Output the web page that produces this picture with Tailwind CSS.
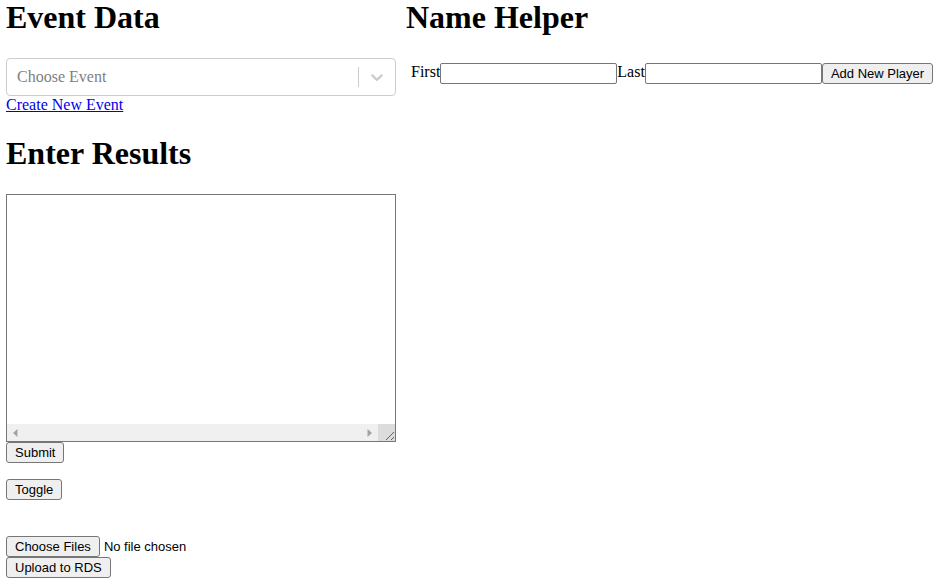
<!DOCTYPE html>
<html lang="en">
<head>
<meta charset="utf-8">
<meta name="viewport" content="width=device-width, initial-scale=1">
<title>Event Data</title>
<script src="https://cdn.jsdelivr.net/npm/@tailwindcss/browser@4"></script>
</head>
<body class="bg-white text-black text-[16px] leading-[18px] font-['Liberation_Serif','Times_New_Roman',serif]">
<main class="flex items-start gap-[10px] pl-[6px] pr-[3px]">
  <div class="w-5/12 shrink-0">
    <section>
      <h1 class="text-[32px] leading-[34px] font-bold">Event Data</h1>
      <div class="relative mt-6">
        <select aria-label="Choose Event" class="block w-full h-[38px] appearance-none rounded border border-[#cccccc] bg-white px-[10px] text-[#808080]">
          <option>Choose Event</option>
        </select>
        <div class="pointer-events-none absolute inset-y-0 right-px flex items-center">
          <span class="h-5 w-px bg-[#cccccc]"></span>
          <svg class="mx-2 size-5" viewBox="0 0 20 20" fill="#cccccc" aria-hidden="true"><path d="M4.516 7.548c0.436-0.446 1.043-0.481 1.576 0l3.908 3.747 3.908-3.747c0.533-0.481 1.141-0.446 1.574 0 0.436 0.445 0.408 1.197 0 1.615-0.406 0.418-4.695 4.502-4.695 4.502-0.217 0.223-0.502 0.335-0.787 0.335s-0.57-0.112-0.789-0.335c0 0-4.287-4.084-4.695-4.502s-0.436-1.17 0-1.615z"/></svg>
        </div>
      </div>
      <a href="#" class="block w-fit text-[#0000ee] underline">Create New Event</a>
    </section>
    <section class="mt-[22px] text-[13px]">
      <h1 class="text-[32px] leading-[34px] font-bold">Enter Results</h1>
      <div class="mt-6 border border-[#767676]">
        <textarea aria-label="Results" wrap="off" class="block h-[229px] w-full resize-none p-[2px] font-['Liberation_Mono',monospace] outline-none"></textarea>
        <div class="flex h-[17px] bg-[#f0f0f0]" aria-hidden="true">
          <div class="flex flex-1 items-center justify-between px-[6px]">
            <svg class="h-2 w-[5px]" viewBox="0 0 5 8" fill="#a3a3a3"><path d="M4.500 0v8L0 4z"/></svg>
            <svg class="h-2 w-[5px]" viewBox="0 0 5 8" fill="#a3a3a3"><path d="M0.500 0v8L5 4z"/></svg>
          </div>
          <svg class="size-[17px] bg-[#dcdcdc]" viewBox="0 0 17 17" stroke="#606060" fill="none"><path d="M8 16l8-8M13 16l3-3"/></svg>
        </div>
      </div>
      <button type="button" class="block h-[21px] rounded-[3px] border border-[#767676] bg-[#efefef] px-2 leading-[15px] font-['Liberation_Sans',Arial,sans-serif]">Submit</button>
      <button type="button" class="mt-4 block h-[21px] rounded-[3px] border border-[#767676] bg-[#efefef] px-2 leading-[15px] font-['Liberation_Sans',Arial,sans-serif]">Toggle</button>
      <input type="file" multiple aria-label="Choose Files" class="mt-9 block h-[21px] w-full leading-[15px] font-['Liberation_Sans',Arial,sans-serif] file:me-1 file:h-[21px] file:rounded-[3px] file:border file:border-solid file:border-[#767676] file:bg-[#efefef] file:px-2">
      <button type="button" class="block h-[21px] rounded-[3px] border border-[#767676] bg-[#efefef] px-2 leading-[15px] font-['Liberation_Sans',Arial,sans-serif]">Upload to RDS</button>
    </section>
  </div>
  <section class="min-w-0 flex-1">
    <h1 class="text-[32px] leading-[34px] font-bold">Name Helper</h1>
    <form class="mt-[29px] flex items-start px-[5px]">
      <label for="first">First</label>
      <input id="first" type="text" class="h-[21px] w-[177px] rounded-[2px] border border-[#767676] px-[2px] text-[13px] font-['Liberation_Sans',Arial,sans-serif]">
      <label for="last">Last</label>
      <input id="last" type="text" class="h-[21px] w-[177px] rounded-[2px] border border-[#767676] px-[2px] text-[13px] font-['Liberation_Sans',Arial,sans-serif]">
      <button type="button" class="h-[21px] shrink-0 whitespace-nowrap rounded-[3px] border border-[#767676] bg-[#efefef] px-2 text-[13px] leading-[15px] font-['Liberation_Sans',Arial,sans-serif]">Add New Player</button>
    </form>
  </section>
</main>
</body>
</html>
